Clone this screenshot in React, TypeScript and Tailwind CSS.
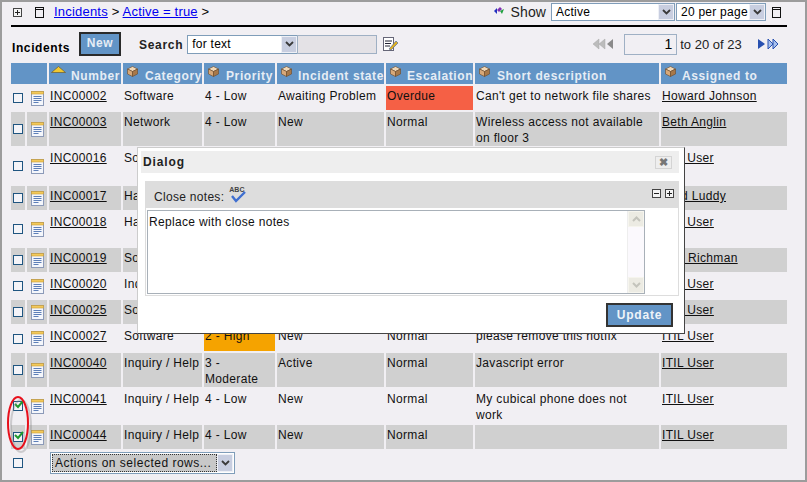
import type { ReactNode } from "react";

type Row = {
  num: string;
  cat: string;
  pri: ReactNode;
  state: string;
  esc: string;
  desc: ReactNode;
  who: string;
  h: number;
  gray?: boolean;
  checked?: boolean;
  priBg?: string;
  escBg?: string;
};

const ROWS: Row[] = [
  { num: "INC00002", cat: "Software", pri: "4 - Low", state: "Awaiting Problem", esc: "Overdue", desc: "Can't get to network file shares", who: "Howard Johnson", h: 24, escBg: "bg-[#f56045]" },
  { num: "INC00003", cat: "Network", pri: "4 - Low", state: "New", esc: "Normal", desc: "Wireless access not available on floor 3", who: "Beth Anglin", h: 34, gray: true },
  { num: "INC00016", cat: "Software", pri: "4 - Low", state: "New", esc: "Normal", desc: "Rain is leaking on main DNS", who: "ITIL User", h: 36 },
  { num: "INC00017", cat: "Hardware", pri: "4 - Low", state: "Active", esc: "Normal", desc: "Printer is out of toner", who: "Fred Luddy", h: 24, gray: true },
  { num: "INC00018", cat: "Hardware", pri: "4 - Low", state: "New", esc: "Normal", desc: "Sales forecast is read only", who: "ITIL User", h: 34 },
  { num: "INC00019", cat: "Software", pri: "4 - Low", state: "New", esc: "Normal", desc: "Need shared drive access", who: "Bud Richman", h: 24, gray: true },
  { num: "INC00020", cat: "Inquiry / Help", pri: "4 - Low", state: "New", esc: "Normal", desc: "Email server is down", who: "ITIL User", h: 24 },
  { num: "INC00025", cat: "Software", pri: "4 - Low", state: "New", esc: "Normal", desc: "Need a new keyboard", who: "ITIL User", h: 24, gray: true },
  { num: "INC00027", cat: "Software", pri: "2 - High", state: "New", esc: "Normal", desc: "please remove this hotfix", who: "ITIL User", h: 25, priBg: "bg-[#f5a300]" },
  { num: "INC00040", cat: "Inquiry / Help", pri: "3 - Moderate", state: "Active", esc: "Normal", desc: "Javascript error", who: "ITIL User", h: 34, gray: true },
  { num: "INC00041", cat: "Inquiry / Help", pri: "4 - Low", state: "New", esc: "Normal", desc: "My cubical phone does not work", who: "ITIL User", h: 34, checked: true },
  { num: "INC00044", cat: "Inquiry / Help", pri: "4 - Low", state: "New", esc: "Normal", desc: "", who: "ITIL User", h: 24, gray: true, checked: true },
];

const COLS = [14, 20, 72, 79, 71, 107, 87, 184, 126];

function Cube() {
  return (
    <svg width="11" height="11" viewBox="0 0 11 11" className="absolute left-[4px] top-[3px]">
      <path d="M5.5 0.5 10.5 3 5.5 5.5 0.5 3Z" fill="#f0d8b8" stroke="#6b4a2a" strokeWidth="0.6" />
      <path d="M0.5 3 5.5 5.5V10.5L0.5 8Z" fill="#d8a878" stroke="#6b4a2a" strokeWidth="0.6" />
      <path d="M10.5 3 5.5 5.5V10.5L10.5 8Z" fill="#a87848" stroke="#6b4a2a" strokeWidth="0.6" />
    </svg>
  );
}

function DocIcon() {
  return (
    <svg width="13" height="15" viewBox="0 0 13 15" className="block mx-auto">
      <rect x="0.5" y="0.5" width="12" height="14" fill="#f4f6fb" stroke="#8c9ab8" />
      <rect x="0.5" y="0.5" width="12" height="2.5" fill="#f3c95a" stroke="#c89a30" strokeWidth="0.6" />
      <path d="M2.5 5.5H10.5M2.5 7.5H10.5M2.5 9.5H10.5M2.5 11.5H7.5" stroke="#5d7fb8" />
    </svg>
  );
}

function Check({ on }: { on?: boolean }) {
  return (
    <span className="relative block w-[10px] h-[10px] mx-auto border border-[#1f5580] bg-[#f4f4f8]">
      {on && (
        <svg width="12" height="10" viewBox="0 0 12 10" className="absolute left-[-1px] top-[-3px]">
          <path d="M2 5 5 8 10 2" fill="none" stroke="#1e9a2e" strokeWidth="2" />
        </svg>
      )}
    </span>
  );
}

function Arrow() {
  return (
    <span className="flex items-center justify-center w-[16px] h-full shrink-0 bg-[#c8cee0] border border-[#eef0f6]">
      <svg width="9" height="6" viewBox="0 0 9 6">
        <path d="M1 1 4.5 4.5 8 1" fill="none" stroke="#3a3a3a" strokeWidth="1.8" />
      </svg>
    </span>
  );
}

function Select({ label, className }: { label: string; className: string }) {
  return (
    <div className={`flex items-stretch bg-white border border-[#7f9db9] ${className}`}>
      <span className="flex-1 pl-[4px] leading-[16px] tracking-[0.25px] text-[12px] text-black">{label}</span>
      <Arrow />
    </div>
  );
}

function PlusBox({ minus }: { minus?: boolean }) {
  return (
    <svg width="9" height="9" viewBox="0 0 9 9" className="block shrink-0">
      <rect x="0.5" y="0.5" width="8" height="8" fill="#f4f4f4" stroke="#444" />
      <path d={minus ? "M2 4.5H7" : "M2 4.5H7M4.5 2V7"} stroke="#222" />
    </svg>
  );
}

function WindowIcon() {
  return (
    <svg width="9" height="11" viewBox="0 0 9 11" className="block shrink-0">
      <rect x="0.5" y="0.5" width="8" height="10" fill="none" stroke="#111" />
      <path d="M0.5 2.5H8.5" stroke="#111" />
    </svg>
  );
}

function Th({ children, w, cube = true }: { children: ReactNode; w: number; cube?: boolean }) {
  return (
    <th
      style={{ width: w }}
      className="relative h-[21px] p-0 pt-[4px] bg-[#6294c6] text-left text-[#e6edf5] font-bold text-[12px] leading-[16px] tracking-[0.62px] whitespace-nowrap overflow-hidden"
    >
      {cube && <Cube />}
      {children}
    </th>
  );
}

export default function App() {
  return (
    <div className="relative w-[807px] h-[482px] overflow-hidden bg-[#f1eff3] border-[2px] border-[#9c9c9c] font-['Liberation_Sans',Arial,sans-serif] text-[12px] text-black">
      {/* breadcrumb bar */}
      <div className="h-[22px] pt-[1px] ml-[9px] w-[776px] border-b-[2px] border-black box-content">
        <div className="flex items-center w-full h-[18px] pl-[2px]">
          <PlusBox />
          <span className="ml-[13px]"><WindowIcon /></span>
          <span className="ml-[10px] text-[13px] tracking-[0.2px] leading-[18px] whitespace-nowrap">
            <a className="underline text-[#0000f0]">Incidents</a> &gt;{" "}
            <a className="underline text-[#0000f0]">Active = true</a> &gt;
          </span>
          <svg width="12" height="10" viewBox="0 0 12 10" className="ml-auto mr-[6px] mb-[3px]">
            <path d="M1 5 4 2V8Z" fill="#2030c0" />
            <path d="M4 4 7 1 9 3 6 6Z" fill="#8030b0" />
            <path d="M7 5 11 3 9 8Z" fill="#20a040" />
          </svg>
          <span className="text-[14px] text-[#222] mr-[5px] tracking-[0.1px]">Show</span>
          <Select label="Active" className="w-[124px] h-[18px]" />
          <Select label="20 per page" className="w-[90px] h-[18px] ml-[1px]" />
          <span className="ml-[6px] mr-[6px]"><WindowIcon /></span>
        </div>
      </div>

      {/* list toolbar */}
      <div className="flex items-center h-[34px] ml-[10px] w-[776px]">
        <span className="font-bold tracking-[0.6px] mt-[8px] w-[67px]">Incidents</span>
        <button className="w-[42px] h-[24px] bg-[#6294c6] border-[2px] border-[#2a2a2a] text-[#e6edf5] font-bold tracking-[0.6px] leading-none pb-[3px]">New</button>
        <span className="ml-[18px] mt-[1px] font-bold tracking-[0.7px] text-[#222]">Search</span>
        <Select label="for text" className="ml-[4px] w-[110px] h-[19px] border-r-0" />
        <div className="w-[80px] h-[19px] bg-[#e4e2e6] border border-[#9fb0c4]" />
        <svg width="17" height="17" viewBox="0 0 17 17" className="ml-[5px]">
          <rect x="1.5" y="1.5" width="10" height="13" fill="#fff" stroke="#667" />
          <path d="M3 5H10M3 7.5H9M3 10H8" stroke="#223" />
          <path d="M7 13 14 5 16 7 9 14Z" fill="#e0b020" stroke="#4060a0" strokeWidth="0.6" />
        </svg>
        <svg width="22" height="12" viewBox="0 0 22 12" className="ml-[193px]">
          <path d="M7 1V11L1 6ZM13 1V11L7 6Z" fill="#bcbcbc" stroke="#a8a8a8" strokeWidth="0.5" />
          <path d="M21 1V11L15 6Z" fill="#8a8a8a" />
        </svg>
        <div className="ml-[10px] w-[53px] h-[21px] border border-[#9fb0c4] text-right pr-[4px] text-[14px] leading-[18px]">1</div>
        <span className="ml-[3px] mt-[1px] text-[13px] leading-[18px] text-[#222] whitespace-nowrap">to 20 of 23</span>
        <svg width="22" height="12" viewBox="0 0 22 12" className="ml-[15px]">
          <path d="M1 1V11L8 6Z" fill="#2850b0" />
          <path d="M11 1V11L16 6ZM16 1V11L21 6Z" fill="#a8c0ec" stroke="#2850b0" strokeWidth="1" />
        </svg>
      </div>

      {/* incidents table */}
      <table className="table-fixed border-separate border-spacing-[2px] ml-[7px] w-[780px]">
        <colgroup>
          {COLS.map((w, i) => (
            <col key={i} style={{ width: w }} />
          ))}
        </colgroup>
        <thead>
          <tr>
            <th colSpan={2} className="bg-[#6294c6] p-0" />
            <Th w={72} cube={false}>
              <svg width="15" height="7" viewBox="0 0 15 7" className="absolute left-[2px] top-[3px]">
                <path d="M7.5 0.5 14.5 6.5H0.5Z" fill="#f0c830" stroke="#6a5a30" strokeWidth="0.7" />
              </svg>
              <span className="pl-[22px]">Number</span>
            </Th>
            <Th w={79}><span className="pl-[22px]">Category</span></Th>
            <Th w={71}><span className="pl-[22px]">Priority</span></Th>
            <Th w={107}><span className="pl-[21px]">Incident state</span></Th>
            <Th w={87}><span className="pl-[21px]">Escalation</span></Th>
            <Th w={184}><span className="pl-[22px]">Short description</span></Th>
            <Th w={126}><span className="pl-[21px]">Assigned to</span></Th>
          </tr>
        </thead>
        <tbody>
          {ROWS.map((r) => {
            const bg = r.gray ? "bg-[#d0d0d0]" : "";
            const cell = `p-0 pl-[1px] pt-[2px] align-top leading-[16px] tracking-[0.33px] text-[#111] ${bg}`;
            return (
              <tr key={r.num} style={{ height: r.h }}>
                <td className={`p-0 align-middle ${bg}`}><Check on={r.checked} /></td>
                <td className={`p-0 align-middle ${bg}`}><DocIcon /></td>
                <td className={cell}><a className="underline">{r.num}</a></td>
                <td className={cell}>{r.cat}</td>
                <td className={`${cell} ${r.priBg ?? ""}`}>{r.pri}</td>
                <td className={cell}>{r.state}</td>
                <td className={`${cell} ${r.escBg ?? ""}`}>{r.esc}</td>
                <td className={`${cell} pr-[5px]`}>{r.desc}</td>
                <td className={cell}><a className="underline">{r.who}</a></td>
              </tr>
            );
          })}
        </tbody>
      </table>

      {/* actions on selected rows */}
      <div className="flex items-center ml-[9px] h-[23px]">
        <div className="w-[14px]"><Check /></div>
        <div className="flex items-stretch ml-[25px] w-[185px] h-[22px] bg-white border border-[#7f9db9] p-[1px]">
          <span className="flex-1 bg-[#c8c8c8] border border-dotted border-[#333] pl-[2px] leading-[16px] text-[12px] tracking-[0.5px] text-[#111] whitespace-nowrap overflow-hidden">Actions on selected rows...</span>
          <Arrow />
        </div>
      </div>

      {/* red marker around the ticked rows */}
      <svg width="30" height="62" viewBox="0 0 30 62" className="absolute left-[3px] top-[391px]">
        <ellipse cx="14" cy="31" rx="10" ry="26" fill="none" stroke="#888" strokeOpacity="0.35" strokeWidth="2" transform="translate(2 2)" />
        <ellipse cx="13" cy="30" rx="10" ry="26" fill="none" stroke="#e8101c" strokeWidth="2" />
      </svg>

      {/* dialog */}
      <div className="absolute left-[135px] top-[145px] w-[548px] h-[187px] bg-white border-r border-b border-[#444] border-t border-t-[#ccc] border-l border-l-[#ccc] px-[2px] pt-[3px]">
        <div className="flex items-center justify-between h-[22px] bg-[#eeeeee] ml-[1px] mr-[3px]">
          <span className="pl-[2px] font-bold text-[#222] tracking-[0.9px]">Dialog</span>
          <span className="flex items-center justify-center w-[17px] h-[13px] mr-[7px] border border-[#d4d4d4] text-[#777] text-[11px] font-bold leading-none">✖</span>
        </div>
        <div className="ml-[5px] mr-[3px] mt-[8px] border-r border-b border-l border-[#dddddd] pb-[1px]">
          <div className="relative flex items-start h-[27px] bg-[#dddddd]">
            <span className="ml-[8px] mt-[9px] leading-[14px] tracking-[0.3px] text-[#222]">Close notes:</span>
            <span className="relative ml-[5px] mt-[5px] w-[17px] h-[16px]">
              <span className="absolute left-0 top-0 text-[7px] leading-[7px] font-bold text-[#444]">ABC</span>
              <svg width="16" height="12" viewBox="0 0 16 12" className="absolute left-[1px] top-[5px]">
                <path d="M2 5 6 10 15 1" fill="none" stroke="#3f6fd0" strokeWidth="2.4" />
              </svg>
            </span>
            <div className="ml-auto mt-[8px] mr-[4px] flex items-center gap-[4px]">
              <PlusBox minus />
              <PlusBox />
            </div>
          </div>
          <div className="flex ml-[1px] mt-[2px] mr-[33px] h-[84px] border border-[#a8b0b8] bg-white">
            <span className="flex-1 pl-[1px] pt-[3px] leading-[16px] tracking-[0.33px] text-[#111]">Replace with close notes</span>
            <div className="flex flex-col justify-between w-[17px] bg-[#fbf9fd] border-l border-[#eeeeee]">
              <span className="flex items-center justify-center h-[16px] bg-[#ecebe3] border border-[#f6f5ee]">
                <svg width="9" height="6" viewBox="0 0 9 6"><path d="M1 5 4.5 1.5 8 5" fill="none" stroke="#c4c4bc" strokeWidth="2" /></svg>
              </span>
              <span className="flex items-center justify-center h-[16px] bg-[#ecebe3] border border-[#f6f5ee]">
                <svg width="9" height="6" viewBox="0 0 9 6"><path d="M1 1 4.5 4.5 8 1" fill="none" stroke="#c4c4bc" strokeWidth="2" /></svg>
              </span>
            </div>
          </div>
        </div>
        <div className="flex justify-end mt-[7px] mr-[9px]">
          <button className="w-[67px] h-[24px] bg-[#6294c6] border-[2px] border-[#333] text-[#eef3f8] font-bold tracking-[0.8px] leading-none">Update</button>
        </div>
      </div>
    </div>
  );
}
